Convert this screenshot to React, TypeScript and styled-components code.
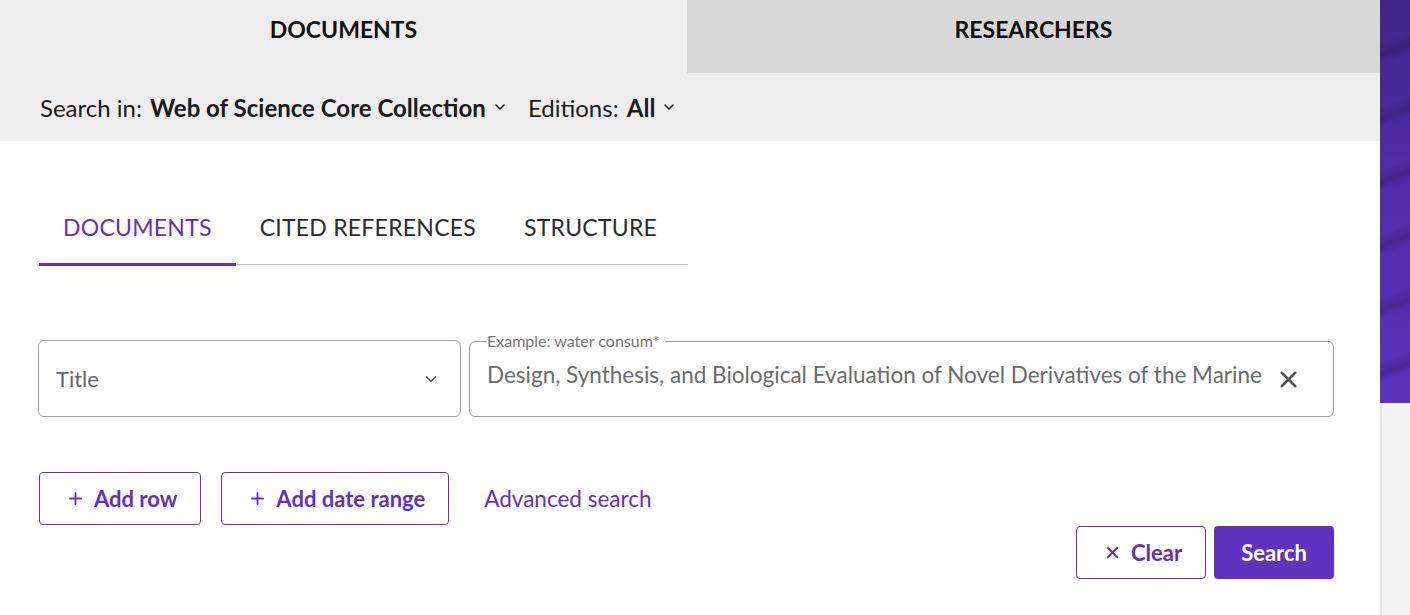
import React from 'react';
import styled, { createGlobalStyle } from 'styled-components';
import { ChevronDown, X, Plus } from 'lucide-react';

const PURPLE = '#5e33bf';
const FONT = "Lato, 'Noto Sans', sans-serif";

const GlobalStyle = createGlobalStyle`
    html, body {
        margin: 0;
        padding: 0;
        background: #ffffff;
        font-family: ${FONT};
    }
    * {
        box-sizing: border-box;
    }
`;

export default function App() {
    return (
        <>
            <GlobalStyle />
            <Page>
                <Main>
                    <TopTabs>
                        <TopTab active>DOCUMENTS</TopTab>
                        <TopTab>RESEARCHERS</TopTab>
                    </TopTabs>
                    <ScopeBar>
                        <ScopeItem>
                            Search in: <strong>Web of Science Core Collection</strong>
                            <ChevronDown size={16} strokeWidth={2.4} />
                        </ScopeItem>
                        <ScopeItem>
                            Editions: <strong>All</strong>
                            <ChevronDown size={16} strokeWidth={2.4} />
                        </ScopeItem>
                    </ScopeBar>
                    <Content>
                        <SubTabs>
                            <SubTab active>DOCUMENTS</SubTab>
                            <SubTab>CITED REFERENCES</SubTab>
                            <SubTab>STRUCTURE</SubTab>
                        </SubTabs>
                        <FieldRow>
                            <Select>
                                <span>Title</span>
                                <ChevronDown size={18} strokeWidth={2} color="#555" />
                            </Select>
                            <InputBox>
                                <Legend>Example: water consum*</Legend>
                                <InputText>
                                    Design, Synthesis, and Biological Evaluation of Novel Derivatives of the Marine
                                </InputText>
                                <ClearIcon>
                                    <X size={27} strokeWidth={2.3} color="#555" />
                                </ClearIcon>
                            </InputBox>
                        </FieldRow>
                        <AddRow>
                            <OutlineButton>
                                <Plus size={19} strokeWidth={2.3} />
                                Add row
                            </OutlineButton>
                            <OutlineButton>
                                <Plus size={19} strokeWidth={2.3} />
                                Add date range
                            </OutlineButton>
                            <TextLink>Advanced search</TextLink>
                        </AddRow>
                        <Actions>
                            <OutlineButton>
                                <X size={19} strokeWidth={2.4} />
                                Clear
                            </OutlineButton>
                            <PrimaryButton>Search</PrimaryButton>
                        </Actions>
                    </Content>
                </Main>
                <Side>
                    <Banner />
                    <SideRest />
                </Side>
            </Page>
        </>
    );
}

const Page = styled.div`
    display: flex;
    width: 1410px;
    height: 615px;
    overflow: hidden;
`;

const Main = styled.div`
    width: 1380px;
    display: flex;
    flex-direction: column;
    background: #ffffff;
`;

const TopTabs = styled.div`
    display: flex;
    height: 73px;
`;

const TopTab = styled.div<{ active?: boolean }>`
    flex: 1;
    display: flex;
    align-items: center;
    justify-content: center;
    padding-bottom: 16px;
    background: ${({ active }) => (active ? '#eeeeee' : '#d8d8d8')};
    color: #111111;
    font-size: 23px;
    font-weight: 700;

    &:first-child {
        flex: 0 0 687px;
    }
`;

const ScopeBar = styled.div`
    display: flex;
    align-items: center;
    gap: 20px;
    height: 68px;
    padding: 0 0 0 40px;
    background: #eeeeee;
`;

const ScopeItem = styled.div`
    display: flex;
    align-items: center;
    gap: 6px;
    color: #1a1a1a;
    font-size: 24px;
    white-space: pre;

    strong {
        font-weight: 700;
        margin-left: -4px;
    }
`;

const Content = styled.div`
    flex: 1;
    display: flex;
    flex-direction: column;
    padding: 50px 46px 0 39px;
`;

const SubTabs = styled.div`
    display: flex;
    width: 649px;
    border-bottom: 1px solid #bdbdbd;
`;

const SubTab = styled.div<{ active?: boolean }>`
    height: 75px;
    display: flex;
    align-items: center;
    padding: 0 24px 0;
    margin-bottom: -2px;
    font-size: 23px;
    letter-spacing: 0.25px;
    color: ${({ active }) => (active ? PURPLE : '#2b2b2b')};
    border-bottom: 3px solid ${({ active }) => (active ? PURPLE : 'transparent')};
`;

const FieldRow = styled.div`
    display: flex;
    gap: 8px;
    margin-top: 75px;
    margin-left: -1px;
`;

const Select = styled.div`
    width: 423px;
    height: 77px;
    display: flex;
    align-items: center;
    justify-content: space-between;
    padding: 0 20px 0 17px;
    border: 1px solid #9e9e9e;
    border-radius: 6px;
    color: #666666;
    font-size: 22px;
`;

const InputBox = styled.fieldset`
    position: relative;
    flex: 1;
    height: 84px;
    margin: -7px 0 0;
    padding: 0 70px 0 17px;
    border: 1px solid #9e9e9e;
    border-radius: 6px;
    min-width: 0;
`;

const Legend = styled.legend`
    padding: 0 6px 0 0;
    margin-left: 0;
    color: #757575;
    font-size: 16px;
    line-height: 16px;
`;

const InputText = styled.div`
    margin-top: 12px;
    color: #6b6b6b;
    font-size: 22.5px;
    white-space: nowrap;
    overflow: hidden;
`;

const ClearIcon = styled.span`
    position: absolute;
    right: 31px;
    top: 17px;
    display: flex;
`;

const AddRow = styled.div`
    display: flex;
    align-items: center;
    gap: 20px;
    margin-top: 55px;
`;

const OutlineButton = styled.button`
    display: inline-flex;
    align-items: center;
    gap: 9px;
    height: 53px;
    padding: 0 23px 0 26px;
    border: 1px solid ${PURPLE};
    border-radius: 4px;
    background: #ffffff;
    color: ${PURPLE};
    font-family: ${FONT};
    font-size: 22px;
    font-weight: 700;
`;

const TextLink = styled.span`
    margin-left: 15px;
    color: ${PURPLE};
    font-size: 22.5px;
`;

const Actions = styled.div`
    display: flex;
    justify-content: flex-end;
    gap: 8px;
    margin-top: 1px;
`;

const PrimaryButton = styled.button`
    height: 53px;
    padding: 0 27px;
    border: none;
    border-radius: 4px;
    background: ${PURPLE};
    color: #ffffff;
    font-family: ${FONT};
    font-size: 22px;
    font-weight: 700;
`;

const Side = styled.div`
    width: 30px;
    display: flex;
    flex-direction: column;
`;

const Banner = styled.div`
    height: 403px;
    background:
        repeating-linear-gradient(
            160deg,
            rgba(40, 20, 90, 0) 0px,
            rgba(40, 20, 90, 0) 40px,
            rgba(40, 20, 90, 0.35) 52px,
            rgba(40, 20, 90, 0) 60px
        ),
        linear-gradient(180deg, #402585 0%, #4f2da8 45%, #5a34b8 100%);
`;

const SideRest = styled.div`
    flex: 1;
    background: #f3f3f3;
    border-left: 2px solid #e3e3e3;
`;
